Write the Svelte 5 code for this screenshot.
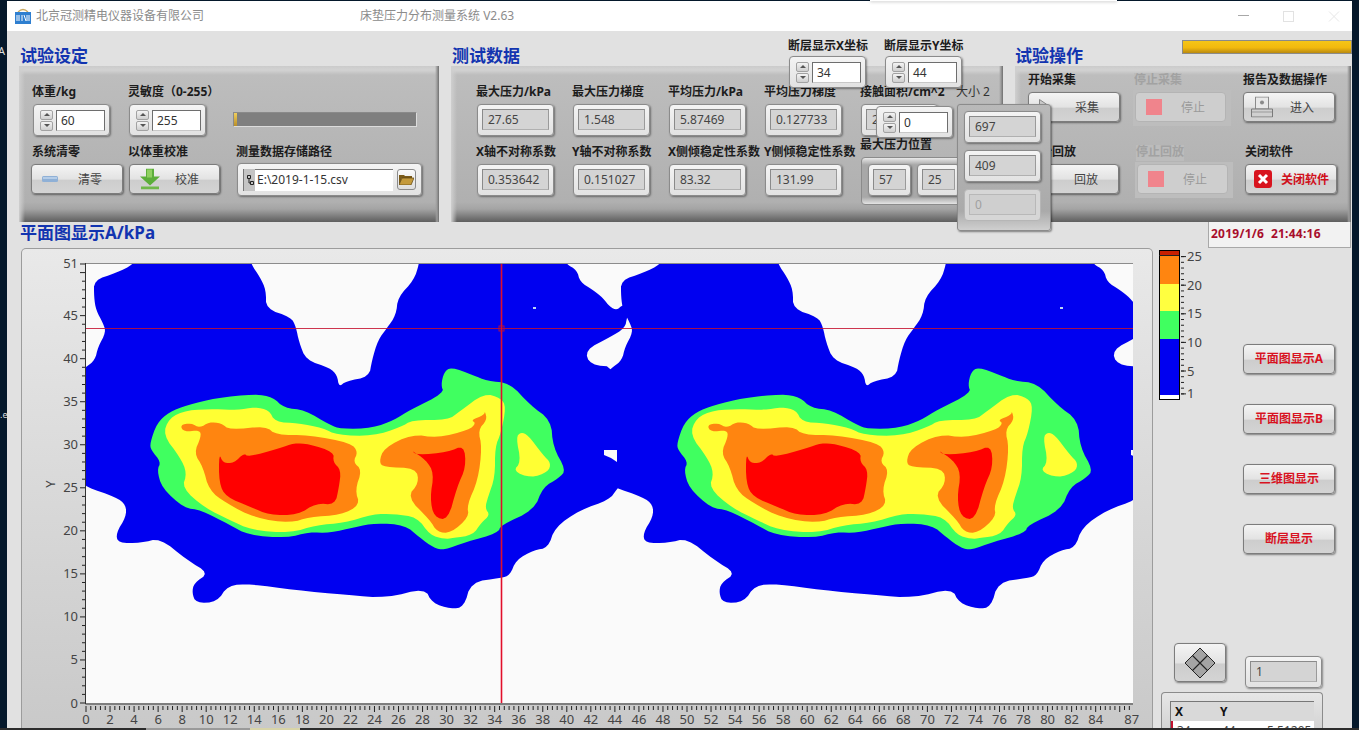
<script>
  // heat map outlines in screen pixels, second foot pair is the same shape moved 527px
  const smooth = (text) => {
    let pts = text.split(' ').map((p) => p.split(',').map(Number));
    for (let pass = 0; pass < 2; pass++) {
      const next = [];
      pts.forEach((a, i) => {
        const b = pts[(i + 1) % pts.length];
        next.push([a[0] * 0.75 + b[0] * 0.25, a[1] * 0.75 + b[1] * 0.25]);
        next.push([a[0] * 0.25 + b[0] * 0.75, a[1] * 0.25 + b[1] * 0.75]);
      });
      pts = next;
    }
    return pts.map((p) => p.join(',')).join(' ');
  };

  const blue = smooth('94,280 116,273 134,264 134,258 251,258 251,264 260,277 266,290 266,309 291,317 296,327 299,342 306,360 330,368 337,375 339,387 346,381 369,377 372,360 378,340 387,328 396,315 398,297 414,280 419,264 419,258 566,258 566,264 577,270 580,282 593,290 603,298 610,307 617,310 622,305 632,305 627,317 625,328 610,337 585,350 590,365 617,367 630,440 625,480 617,489 609,500 580,510 555,527 548,548 534,550 516,560 510,575 501,578 471,582 464,607 451,609 432,603 425,588 387,598 348,595 294,590 251,584 228,585 217,602 196,603 192,593 194,583 209,573 187,560 160,538 141,543 118,543 116,533 126,517 126,505 116,497 86,487 80,480 80,372 86,367 95,360 98,347 106,332 103,323 96,310 94,297');
  const green = smooth('150,443 157,423 169,412 187,405 216,398 255,394 273,397 284,408 305,410 330,425 341,429 373,428 394,420 410,410 444,393 441,385 444,372 451,367 473,375 487,381 510,383 530,405 551,420 553,447 566,470 559,478 543,487 534,510 501,525 498,533 466,542 444,550 434,548 419,537 405,525 376,523 355,527 330,533 309,532 287,538 248,535 230,525 201,510 184,508 162,488 157,470 161,462 151,450');
  const yellow = smooth('163,435 169,418 187,410 216,409 237,410 255,407 269,410 275,422 298,423 323,428 337,435 373,436 401,427 412,420 448,420 459,412 484,393 501,398 506,407 501,433 495,447 495,477 488,497 485,508 490,515 481,523 473,535 453,538 444,539 430,535 417,517 394,514 373,514 344,523 316,525 291,533 251,530 230,520 205,508 182,488 187,473 180,457');
  const yellowSpot = smooth('521,432 528,435 543,455 551,463 548,472 531,478 513,471 521,462 516,437');
  const orangeL = smooth('180,425 191,423 200,428 209,422 221,423 230,430 266,426 276,435 309,435 351,443 358,452 353,462 362,470 355,490 360,505 341,515 309,517 291,523 255,518 226,503 209,490 203,467 194,453 201,437 200,430 184,432');
  const orangeR = smooth('379,462 384,448 412,434 437,438 469,430 476,423 471,420 484,415 485,411 487,420 478,430 482,447 478,480 467,505 469,517 451,533 437,532 430,520 407,497 419,483 416,468 384,467');
  const redL = smooth('219,453 223,463 234,463 244,453 248,457 280,448 294,443 309,444 334,452 333,462 341,470 339,487 335,505 316,503 298,515 269,515 251,507 226,497 219,483');
  const redR = smooth('411,450 417,455 448,452 464,445 466,467 457,487 448,520 434,517 430,498 434,473 426,460');
  const speck = '604,450 617,450 617,462 611,458 604,455';

  const px = (v) => 86 + v * 12.02;
  const py = (v) => 703 - v * 8.608;

  const xMinor = Array.from({ length: 218 }, (_, i) => 86 + i * 4.808);
  const xLabels = [...Array.from({ length: 43 }, (_, i) => i * 2), 87];
  const yMinor = Array.from({ length: 52 }, (_, i) => i);
  const yLabels = [0, 5, 10, 15, 20, 25, 30, 35, 40, 45, 51];

  const rampTicks = [25, 20, 15, 10, 5, 1];
  const rampY = (v) => 371 - (v - 5) * 5.72;
  const rampMinor = Array.from({ length: 25 }, (_, i) => i + 1);

  const sideButtons = ['平面图显示A', '平面图显示B', '三维图显示', '断层显示'];
  const firstRow = [
    ['最大压力/kPa', '27.65'],
    ['最大压力梯度', '1.548'],
    ['平均压力/kPa', '5.87469'],
    ['平均压力梯度', '0.127733'],
    ['接触面积/cm^2', '2']
  ];
  const secondRow = [
    ['X轴不对称系数', '0.353642'],
    ['Y轴不对称系数', '0.151027'],
    ['X侧倾稳定性系数', '83.32'],
    ['Y侧倾稳定性系数', '131.99']
  ];
</script>

{#snippet numeric(value)}
  <div class="numeric">
    <div class="spin"><i class="up"></i><i class="down"></i></div>
    <div class="entry">{value}</div>
  </div>
{/snippet}

{#snippet indicator(value)}
  <div class="ind"><div class="readout">{value}</div></div>
{/snippet}

{#snippet stopIcon()}
  <svg class="icon" width="16" height="16" viewBox="0 0 16 16"><rect width="16" height="16" fill="#f0848c"/></svg>
{/snippet}

<div class="screen">
  <span class="desk-a">A</span>
  <span class="desk-e">.e</span>
  <div class="edge"></div>

  <div class="window">
    <header class="titlebar">
      <svg class="logo" width="16" height="16" viewBox="0 0 16 16">
        <path d="M3 4 Q8 -1 13 4" fill="none" stroke="#c9a860" stroke-width="1.2"/>
        <rect x="0" y="4" width="16" height="12" fill="#2f7fd0"/>
        <path d="M2 7v6M4 7v6M7 7v6M9 7l2 6M12 7v6M14 7v6" stroke="#fff" stroke-width="1"/>
      </svg>
      <span class="company">北京冠测精电仪器设备有限公司</span>
      <span class="apptitle">床垫压力分布测量系统 V2.63</span>
      <svg class="winctl" width="102" height="12" viewBox="0 0 102 12">
        <path d="M0 5.5H11" stroke="#a8a8a8"/>
        <rect x="45.5" y="1.5" width="10" height="10" fill="none" stroke="#e2e2e2"/>
        <path d="M91 1.5L101 11.5M101 1.5L91 11.5" stroke="#e6e6e6"/>
      </svg>
    </header>

    <main class="content">
      <div class="toprow">
        <section class="sec-setup">
          <div class="head"><h2>试验设定</h2></div>
          <div class="panel grid-setup">
            <div class="field"><label>体重/kg</label><div class="nudge1">{@render numeric('60')}</div></div>
            <div class="field"><label>灵敏度（0-255）</label><div class="nudge1">{@render numeric('255')}</div></div>
            <div class="progress"><i></i></div>
            <div class="field"><label>系统清零</label>
              <button class="btn pull">
                <svg class="icon" width="16" height="6" viewBox="0 0 16 6"><rect width="16" height="6" rx="1.5" fill="#8fb0d6"/><rect x="1" y="1" width="14" height="2" fill="#b5cde8"/></svg>
                清零
              </button>
            </div>
            <div class="field"><label>以体重校准</label>
              <button class="btn push">
                <svg class="icon" width="20" height="21" viewBox="0 0 20 21"><path d="M6 0H14V8H20L10 17 0 8H6Z" fill="#5cae3a"/><path d="M7 1H12V9H7Z" fill="#8fd060"/><rect x="1" y="18" width="18" height="3" fill="#6fb84a"/></svg>
                校准
              </button>
            </div>
            <div class="field path-field"><label>测量数据存储路径</label>
              <div class="pathctl">
                <div class="pathentry">
                  <svg class="tree" width="11" height="22" viewBox="0 0 11 22"><rect width="11" height="22" fill="#c4c4c4"/><path d="M3.5 6.5h3v3h-3zM6.5 12.5h3v3h-3zM5 9.5v4.5h1.5" fill="none" stroke="#222"/></svg>
                  <span>E:\2019-1-15.csv</span>
                </div>
                <div class="browse">
                  <svg width="15" height="11" viewBox="0 0 15 11"><path d="M0 1H5L6 2H13V4H3L0 11Z" fill="#7a5a18"/><path d="M3 4H15L12 11H0Z" fill="#c49a3c" stroke="#5c430f" stroke-width=".7"/></svg>
                </div>
              </div>
            </div>
          </div>
        </section>

        <section class="sec-data">
          <div class="head"><h2>测试数据</h2></div>
          <div class="panel grid-data">
            {#each firstRow as [name, value]}
              <div class="field"><label>{name}</label>{@render indicator(value)}</div>
            {/each}
            {#each secondRow as [name, value]}
              <div class="field"><label>{name}</label>{@render indicator(value)}</div>
            {/each}
            <div class="field maxpos"><label>最大压力位置</label>
              <div class="poscluster">
                <div class="ind short"><div class="readout">57</div></div>
                <div class="ind short"><div class="readout">25</div></div>
              </div>
            </div>
          </div>
        </section>

        <section class="sec-ops">
          <div class="head"><h2>试验操作</h2><div class="gauge"></div></div>
          <div class="panel grid-ops">
            <div class="field"><label>开始采集</label>
              <button class="btn">
                <svg class="icon" width="12" height="16" viewBox="0 0 12 16"><path d="M.5.5L11.5 8 .5 15.5Z" fill="#c9c9c9" stroke="#888"/></svg>
                采集
              </button>
            </div>
            <div class="field"><label class="faded">停止采集</label>
              <div class="offwrap"><button class="btn off">{@render stopIcon()}停止</button></div>
            </div>
            <div class="field"><label>报告及数据操作</label>
              <button class="btn enter">
                <svg class="icon" width="22" height="21" viewBox="0 0 22 21"><rect x="4.5" y=".5" width="13" height="12" fill="#e8e8e8" stroke="#8a8a8a"/><circle cx="11" cy="6" r="2" fill="#8a8a8a"/><path d="M.5 12.5H21.5V20.5H.5Z" fill="#d0d0d0" stroke="#7a7a7a"/><path d="M1 15.5H21" stroke="#9a9a9a"/></svg>
                进入
              </button>
            </div>
            <div class="field"><label>开始回放</label><button class="btn back">回放</button></div>
            <div class="field nudge2"><label class="faded">停止回放</label>
              <div class="offwrap"><button class="btn off">{@render stopIcon()}停止</button></div>
            </div>
            <div class="field nudge2"><label>关闭软件</label>
              <button class="btn quit">
                <svg class="icon" width="18" height="18" viewBox="0 0 18 18"><rect width="18" height="18" rx="3" fill="#d8141e"/><path d="M5 5L13 13M13 5L5 13" stroke="#fff" stroke-width="3"/></svg>
                关闭软件
              </button>
            </div>
          </div>
        </section>
      </div>

      <div class="titlerow">
        <h2>平面图显示A/kPa</h2>
        <div class="clock">2019/1/6&nbsp;&nbsp;21:44:16</div>
      </div>

      <div class="mainrow">
        <div class="chartframe">
          <svg class="chart" width="1132" height="482" viewBox="21 248 1132 482">
            <defs>
              <clipPath id="plotclip"><rect x="86" y="264" width="1047" height="439"/></clipPath>
            </defs>
            <rect x="86" y="264" width="1047" height="439" fill="#fafafa"/>
            <g clip-path="url(#plotclip)">
              {#each [0, 527] as dx}
                <g transform="translate({dx} 0)">
                  <polygon points={blue} fill="#0000f0"/>
                  <rect x="533" y="307" width="3" height="2" fill="#bcd4f4"/>
                  <polygon points={green} fill="#40ff60"/>
                  <polygon points={yellow} fill="#ffff33"/>
                  <polygon points={yellowSpot} fill="#ffff33"/>
                  <polygon points={orangeL} fill="#ff8510"/>
                  <polygon points={orangeR} fill="#ff8510"/>
                  <polygon points={redL} fill="#ff0000"/>
                  <polygon points={redR} fill="#ff0000"/>
                </g>
              {/each}
              {#each [0, 527] as dx}
                <polygon points={speck} fill="#fafafa" transform="translate({dx} 0)"/>
              {/each}
            </g>

            <path d="M86 263.5H1133" stroke="#8c8c8c"/>
            <path d="M85.5 263V704H1133" fill="none" stroke="#333"/>

            <line class="halo" x1="501.5" y1="264" x2="501.5" y2="703"/>
            <line class="cross" x1="86" y1="328.5" x2="1133" y2="328.5"/>
            <line class="cross bright" x1="501.5" y1="264" x2="501.5" y2="703"/>
            <rect class="cross" x="499" y="326" width="5" height="5" fill="none"/>

            {#each yMinor as v}
              <path d="M{v % 5 === 0 || v === 51 ? 80 : 82} {py(v)}H85" stroke="#222"/>
            {/each}
            {#each yLabels as v}
              <text class="axis" x="78" y={py(v) + 4.5} text-anchor="end">{v}</text>
            {/each}
            <text class="axis" transform="translate(55 484) rotate(-90)" text-anchor="middle">Y</text>

            {#each xMinor as x, i}
              <path d="M{x} 706V{i % 5 === 0 ? 712 : 710}" stroke="#222"/>
            {/each}
            {#each xLabels as v}
              <text class="axis" x={px(v)} y="724" text-anchor="middle">{v}</text>
            {/each}
          </svg>
        </div>

        <aside class="side">
          <div class="siderow">
            <svg class="ramp" width="60" height="155" viewBox="1153 248 60 155">
              <rect x="1159" y="250" width="20" height="6" fill="#c82000"/>
              <rect x="1159" y="256" width="20" height="28" fill="#ff8510"/>
              <rect x="1159" y="284" width="20" height="27" fill="#ffff40"/>
              <rect x="1159" y="311" width="20" height="28" fill="#40ff60"/>
              <rect x="1159" y="339" width="20" height="56" fill="#0000f0"/>
              <rect x="1159" y="395" width="20" height="5" fill="#fff"/>
              <rect x="1159.5" y="250.5" width="20" height="149" fill="none" stroke="#000"/>
              <path d="M1159 255.5H1179" stroke="#222"/>
              {#each rampMinor as v}
                <path d="M1181 {rampY(v)}H1184" stroke="#222"/>
              {/each}
              {#each rampTicks as v}
                <path d="M1181 {rampY(v)}H1186" stroke="#222"/>
                <text class="axis" x="1187" y={rampY(v) + 4.5}>{v}</text>
              {/each}
            </svg>
            <div class="sidebtns">
              {#each sideButtons as name}
                <button class="btn view">{name}</button>
              {/each}
            </div>
          </div>

          <div class="toolrow">
            <button class="btn grid2d">
              <svg width="32" height="32" viewBox="0 0 32 32">
                <path d="M16 1L31 16 16 31 1 16Z" fill="#a4a4a4" stroke="#222"/>
                <path d="M8.5 8.5L23.5 23.5M23.5 8.5L8.5 23.5" stroke="#222" stroke-width="1.1"/>
              </svg>
            </button>
            <div class="ind-one">{@render indicator('1')}</div>
          </div>

          <div class="tableframe">
            <div class="table">
              <div class="thead"><b>X</b><b>Y</b><span></span></div>
              <div class="trow"><span>34</span><span>44</span><span>5.51205</span></div>
            </div>
          </div>
        </aside>
      </div>

      <!-- controls that float over the data panel -->
      <div class="floating ov-x"><label>断层显示X坐标</label><div class="nudge1">{@render numeric('34')}</div></div>
      <div class="floating ov-y"><label>断层显示Y坐标</label><div class="nudge1">{@render numeric('44')}</div></div>
      <div class="floating ov-zero">{@render numeric('0')}</div>
      <span class="floating ov-size">大小 2</span>
      <div class="floating ov-stack">
        {@render indicator('697')}
        {@render indicator('409')}
        <div class="disabled">{@render indicator('0')}</div>
      </div>
    </main>
  </div>

  <div class="taskbar"><i class="tb-a"></i><i class="tb-b"></i></div>
</div>

<style>
  :global(body) {
    background: #05182b;
    overflow: hidden;
  }

  .screen {
    position: relative;
    height: 730px;
    overflow: hidden;
    font-family: "Noto Sans", "Noto Sans CJK SC", sans-serif;
    font-size: 12px;
    color: #333;
  }

  .desk-a, .desk-e {
    position: absolute;
    left: -2px;
    top: 43px;
    color: #ddd;
    font-size: 11px;
  }

  .desk-e { left: 0; top: 408px; font-size: 9px; }

  .edge {
    position: absolute;
    left: 870px;
    top: 0;
    width: 247px;
    height: 1px;
    background: #fff;
    box-shadow: 0 1px 3px rgba(0, 0, 0, 0.35);
    z-index: 5;
  }

  .window {
    margin-left: 7px;
    width: 1345px;
    height: 730px;
    padding-top: 1px;
    box-sizing: border-box;
    display: flex;
    flex-direction: column;
  }

  .titlebar {
    height: 30px;
    flex: none;
    background: #fff;
    display: flex;
    align-items: center;
    padding-left: 8px;
    color: #8c8c8c;
    line-height: 14px;
  }

  .logo { margin-right: 5px; }
  .apptitle { margin-left: 156px; }
  .winctl { margin-left: auto; margin-right: 12px; }

  .content {
    position: relative;
    flex: 1;
    min-height: 0;
    background: #e1e1e1;
    padding: 0 1px 0 12px;
  }

  .toprow {
    display: flex;
    gap: 12px;
  }

  .sec-setup { width: 420px; }
  .sec-data { width: 552px; }
  .sec-ops { width: 336px; }

  .head {
    height: 35px;
    display: flex;
    justify-content: space-between;
    align-items: flex-end;
  }

  .head h2 { margin-bottom: -1px; }

  h2 {
    margin: 0 0 0 1px;
    font-size: 17px;
    line-height: 22px;
    font-weight: 700;
    color: #1234b0;
    white-space: nowrap;
  }

  .sec-ops h2 { margin-left: 0; }

  .gauge {
    align-self: flex-start;
    margin-top: 9px;
    margin-right: -1px;
    width: 170px;
    height: 14px;
    box-sizing: border-box;
    border: 1px solid #8a8a8a;
    background: linear-gradient(#f5c518, #f2b90e 55%, #b98a10);
  }

  .panel {
    position: relative;
    height: 156px;
    box-sizing: border-box;
    padding: 19px 0 0 13px;
    background:
      linear-gradient(90deg, #cfcfcf, rgba(207, 207, 207, 0) 6px),
      linear-gradient(270deg, #6e6e6e, #9c9c9c 2px, rgba(156, 156, 156, 0) 4px),
      linear-gradient(#cbcbcb 0, #d2d2d2 4px, #bdbdbd 9px, #b0b0b0 136px, #a4a4a4 143px, #5e5e5e 156px);
  }

  .field { min-width: 0; }

  label {
    display: block;
    height: 14px;
    line-height: 14px;
    margin-bottom: 5px;
    font-weight: 700;
    color: #1c1c1c;
    white-space: nowrap;
  }

  .nudge1 { margin-left: 1px; }
  .nudge2 { margin-left: 2px; }

  .grid-setup {
    display: grid;
    grid-template-columns: 96px 106px 188px;
    grid-template-rows: 51px 52px;
    row-gap: 9px;
  }

  .grid-data {
    display: grid;
    grid-template-columns: repeat(5, 96px);
    grid-template-rows: 51px 52px;
    row-gap: 9px;
    padding-left: 25px;
  }

  .grid-data .field > .ind { margin-left: 1px; }

  .grid-ops {
    display: grid;
    grid-template-columns: 106px 109px 108px;
    grid-template-rows: 48px 48px;
    row-gap: 24px;
    padding-top: 7px;
  }

  .progress {
    margin: 27px 0 0 -1px;
    width: 184px;
    height: 15px;
    box-sizing: border-box;
    background: #7f7f7f;
    border: 1px solid #dcdcdc;
    border-top-color: #8a8a8a;
    border-left-color: #8a8a8a;
  }

  .progress i {
    display: block;
    width: 3px;
    height: 100%;
    background: linear-gradient(#f1cf5c, #b98e28);
  }

  /* numeric control with spinner */
  .numeric, .ind, .pathctl {
    box-sizing: border-box;
    border: 1px solid #8b8b8b;
    border-radius: 4px;
    background: linear-gradient(#f4f4f4, #e2e2e2);
    box-shadow: 1px 1px 2px rgba(0, 0, 0, 0.4);
  }

  .numeric {
    width: 77px;
    height: 32px;
    display: flex;
    align-items: center;
    padding: 0 4px 0 6px;
    gap: 3px;
  }

  .spin {
    width: 13px;
    display: flex;
    flex-direction: column;
    gap: 1px;
  }

  .spin i {
    position: relative;
    display: block;
    height: 10px;
    box-sizing: border-box;
    border: 1px solid #a2a2a2;
    border-radius: 2px;
    background: linear-gradient(#f4f4f4, #cfcfcf);
  }

  .spin i::after {
    content: "";
    position: absolute;
    left: 3px;
    top: 2px;
    border: 3px solid transparent;
    border-top: 0;
    border-bottom: 3px solid #555;
  }

  .spin i.down::after {
    border-bottom: 0;
    border-top: 3px solid #555;
  }

  .entry {
    flex: 1;
    height: 21px;
    line-height: 20px;
    box-sizing: border-box;
    padding-left: 4px;
    background: #fff;
    border: 1px solid #c8c8c8;
    border-top-color: #6e6e6e;
    border-left-color: #6e6e6e;
    border-right-color: #6e6e6e;
    color: #333;
  }

  /* indicator, grey readout */
  .ind {
    width: 77px;
    height: 32px;
    padding: 4px 4px 5px 4px;
  }

  .readout {
    height: 21px;
    line-height: 19px;
    box-sizing: border-box;
    padding-left: 5px;
    background: #d4d4d4;
    border: 1px solid #8a8a8a;
    border-bottom-color: #b0b0b0;
    border-right-color: #9a9a9a;
    color: #444;
  }

  .ind.short { width: 52px; }

  .maxpos { margin-top: -7px; }

  .poscluster {
    position: relative;
    display: flex;
    gap: 6px;
    margin-left: 1px;
    width: 100px;
    height: 48px;
    box-sizing: border-box;
    padding: 6px 0 0 6px;
    border: 1px solid #8b8b8b;
    border-radius: 4px;
    background: linear-gradient(#e9e9e9, #a8a8a8 15%, #a8a8a8 85%, #e4e4e4);
  }

  .pathctl {
    width: 185px;
    height: 33px;
    margin: -1px 0 0 1px;
    display: flex;
    align-items: center;
    padding: 0 5px;
    gap: 4px;
  }

  .path-field { margin-left: 2px; }

  .pathentry {
    flex: 1;
    height: 22px;
    display: flex;
    align-items: center;
    box-sizing: border-box;
    background: #fff;
    border-top: 1px solid #777;
    border-left: 1px solid #777;
    line-height: 20px;
    color: #333;
    gap: 2px;
    white-space: nowrap;
  }

  .tree { flex: none; }

  .browse {
    width: 19px;
    height: 21px;
    display: flex;
    align-items: center;
    justify-content: center;
    box-sizing: border-box;
    border: 1px solid #8b8b8b;
    border-radius: 3px;
    background: linear-gradient(#fafafa, #dedede);
  }

  /* LabVIEW style silver button */
  .btn {
    position: relative;
    width: 92px;
    height: 30px;
    box-sizing: border-box;
    display: block;
    padding: 0 20px 0 0;
    text-align: right;
    font: inherit;
    line-height: 27px;
    color: #444;
    border: 1px solid #7c7c7c;
    border-radius: 4px;
    background: linear-gradient(#f4f4f4, #e3e3e3 50%, #cdcdcd 55%, #d4d4d4);
    box-shadow: 1px 1px 2px rgba(0, 0, 0, 0.45);
  }

  .icon {
    position: absolute;
    left: 10px;
    top: 50%;
    transform: translateY(-50%);
  }

  .pull { margin-left: -1px; }
  .push { margin-left: 1px; width: 91px; }
  .enter .icon { left: 7px; }

  .offwrap {
    width: 98px;
    height: 36px;
    margin: -2px 0 0 -1px;
    padding: 2px 0 0 2px;
    box-sizing: border-box;
    background: #bdbdbd;
  }

  .btn.off {
    width: 91px;
    color: #9a9a9a;
    border-color: #b4b4b4;
    background: #cecece;
    box-shadow: none;
  }

  .faded {
    width: max-content;
    color: #a2a2a2;
    background: #bcbcbc;
    margin-bottom: 3px;
    padding-bottom: 2px;
  }

  .quit {
    padding-right: 7px;
    color: #d0101c;
    font-weight: 700;
  }

  .quit .icon { left: 8px; }

  .back { margin-left: -1px; }

  .titlerow {
    height: 26px;
    display: flex;
    justify-content: space-between;
    align-items: flex-start;
  }

  .clock {
    width: 143px;
    height: 26px;
    box-sizing: border-box;
    padding-left: 2px;
    line-height: 24px;
    letter-spacing: 0.25px;
    background: #f2f2f2;
    border: 1px solid #a8a8a8;
    border-top: 0;
    color: #a80e2c;
    font-weight: 700;
  }

  .mainrow {
    display: flex;
  }

  .chartframe {
    width: 1132px;
    height: 482px;
    margin-left: 2px;
    flex: none;
    border-radius: 5px 5px 0 0;
    background: linear-gradient(#e9e9e9, #c9c9c9);
    box-shadow: inset 0 0 0 1px #9c9c9c;
  }

  .chart { display: block; }

  .cross {
    stroke: #c4122f;
    stroke-opacity: 0.85;
  }

  .cross.bright {
    stroke: #e00f2a;
    stroke-opacity: 1;
  }

  /* the reference smears the thin vertical line a little */
  .halo {
    stroke: #f01030;
    stroke-width: 3;
    stroke-opacity: 0.3;
  }

  .axis {
    font-size: 13px;
    fill: #444;
  }

  .side {
    width: 198px;
    flex: none;
  }

  .siderow {
    height: 395px;
    display: flex;
    justify-content: space-between;
  }

  .ramp { display: block; }

  .sidebtns {
    width: 108px;
    padding-top: 96px;
    display: flex;
    flex-direction: column;
    gap: 30px;
  }

  .btn.view {
    padding: 0;
    text-align: center;
    line-height: 26px;
    color: #d8121f;
    font-weight: 700;
  }

  .toolrow {
    display: flex;
    height: 49px;
    padding-left: 21px;
    gap: 19px;
  }

  .btn.grid2d {
    width: 52px;
    height: 39px;
    padding: 0;
    display: flex;
    align-items: center;
    justify-content: center;
  }

  .ind-one { margin-top: 13px; }

  .tableframe {
    width: 162px;
    height: 40px;
    margin-left: 8px;
    box-sizing: border-box;
    padding: 8px 0 0 8px;
    border: 1px solid #8b8b8b;
    border-bottom: 0;
    border-radius: 4px 4px 0 0;
    background: linear-gradient(#e6e6e6, #d2d2d2);
  }

  .table {
    width: 143px;
    border-top: 1px solid #777;
    border-left: 1px solid #777;
    background: #fff;
  }

  .thead, .trow {
    display: grid;
    grid-template-columns: 45px 45px 53px;
    height: 19px;
    line-height: 19px;
  }

  .thead {
    background: #d9d9d9;
    color: #111;
  }

  .thead b, .trow span { padding-left: 4px; }

  .trow { color: #444; border-left: 2px solid #c4122f; }

  /* floats over the data panel */
  .floating { position: absolute; }

  .ov-x { left: 781px; top: 8px; }
  .ov-y { left: 877px; top: 8px; }
  .ov-x label, .ov-y label { margin-bottom: 3px; }
  .ov-zero { left: 869px; top: 75px; }
  .ov-size { left: 949px; top: 54px; line-height: 14px; color: #333; }

  .ov-stack {
    left: 950px;
    top: 73px;
    width: 94px;
    height: 127px;
    box-sizing: border-box;
    padding: 6px;
    display: flex;
    flex-direction: column;
    gap: 7px;
    border: 1px solid #8b8b8b;
    border-radius: 3px;
    background: linear-gradient(#b9b9b9, #aaa 85%, #cfcfcf);
    box-shadow: 1px 1px 2px rgba(0, 0, 0, 0.45);
  }

  .disabled .ind { background: #d6d6d6; border-color: #b6b6b6; box-shadow: none; }
  .disabled .readout { color: #a0a0a0; background: #cfcfcf; border-color: #b8b8b8; }

  .taskbar {
    position: absolute;
    left: 0;
    right: 0;
    bottom: 0;
    height: 2px;
    background: #2c2c2c;
    z-index: 6;
  }

  .tb-a, .tb-b {
    position: absolute;
    top: 0;
    height: 2px;
  }

  .tb-a { left: 146px; width: 104px; background: #9a9a9a; }
  .tb-b { left: 250px; width: 50px; background: #d8d4a8; }
</style>
